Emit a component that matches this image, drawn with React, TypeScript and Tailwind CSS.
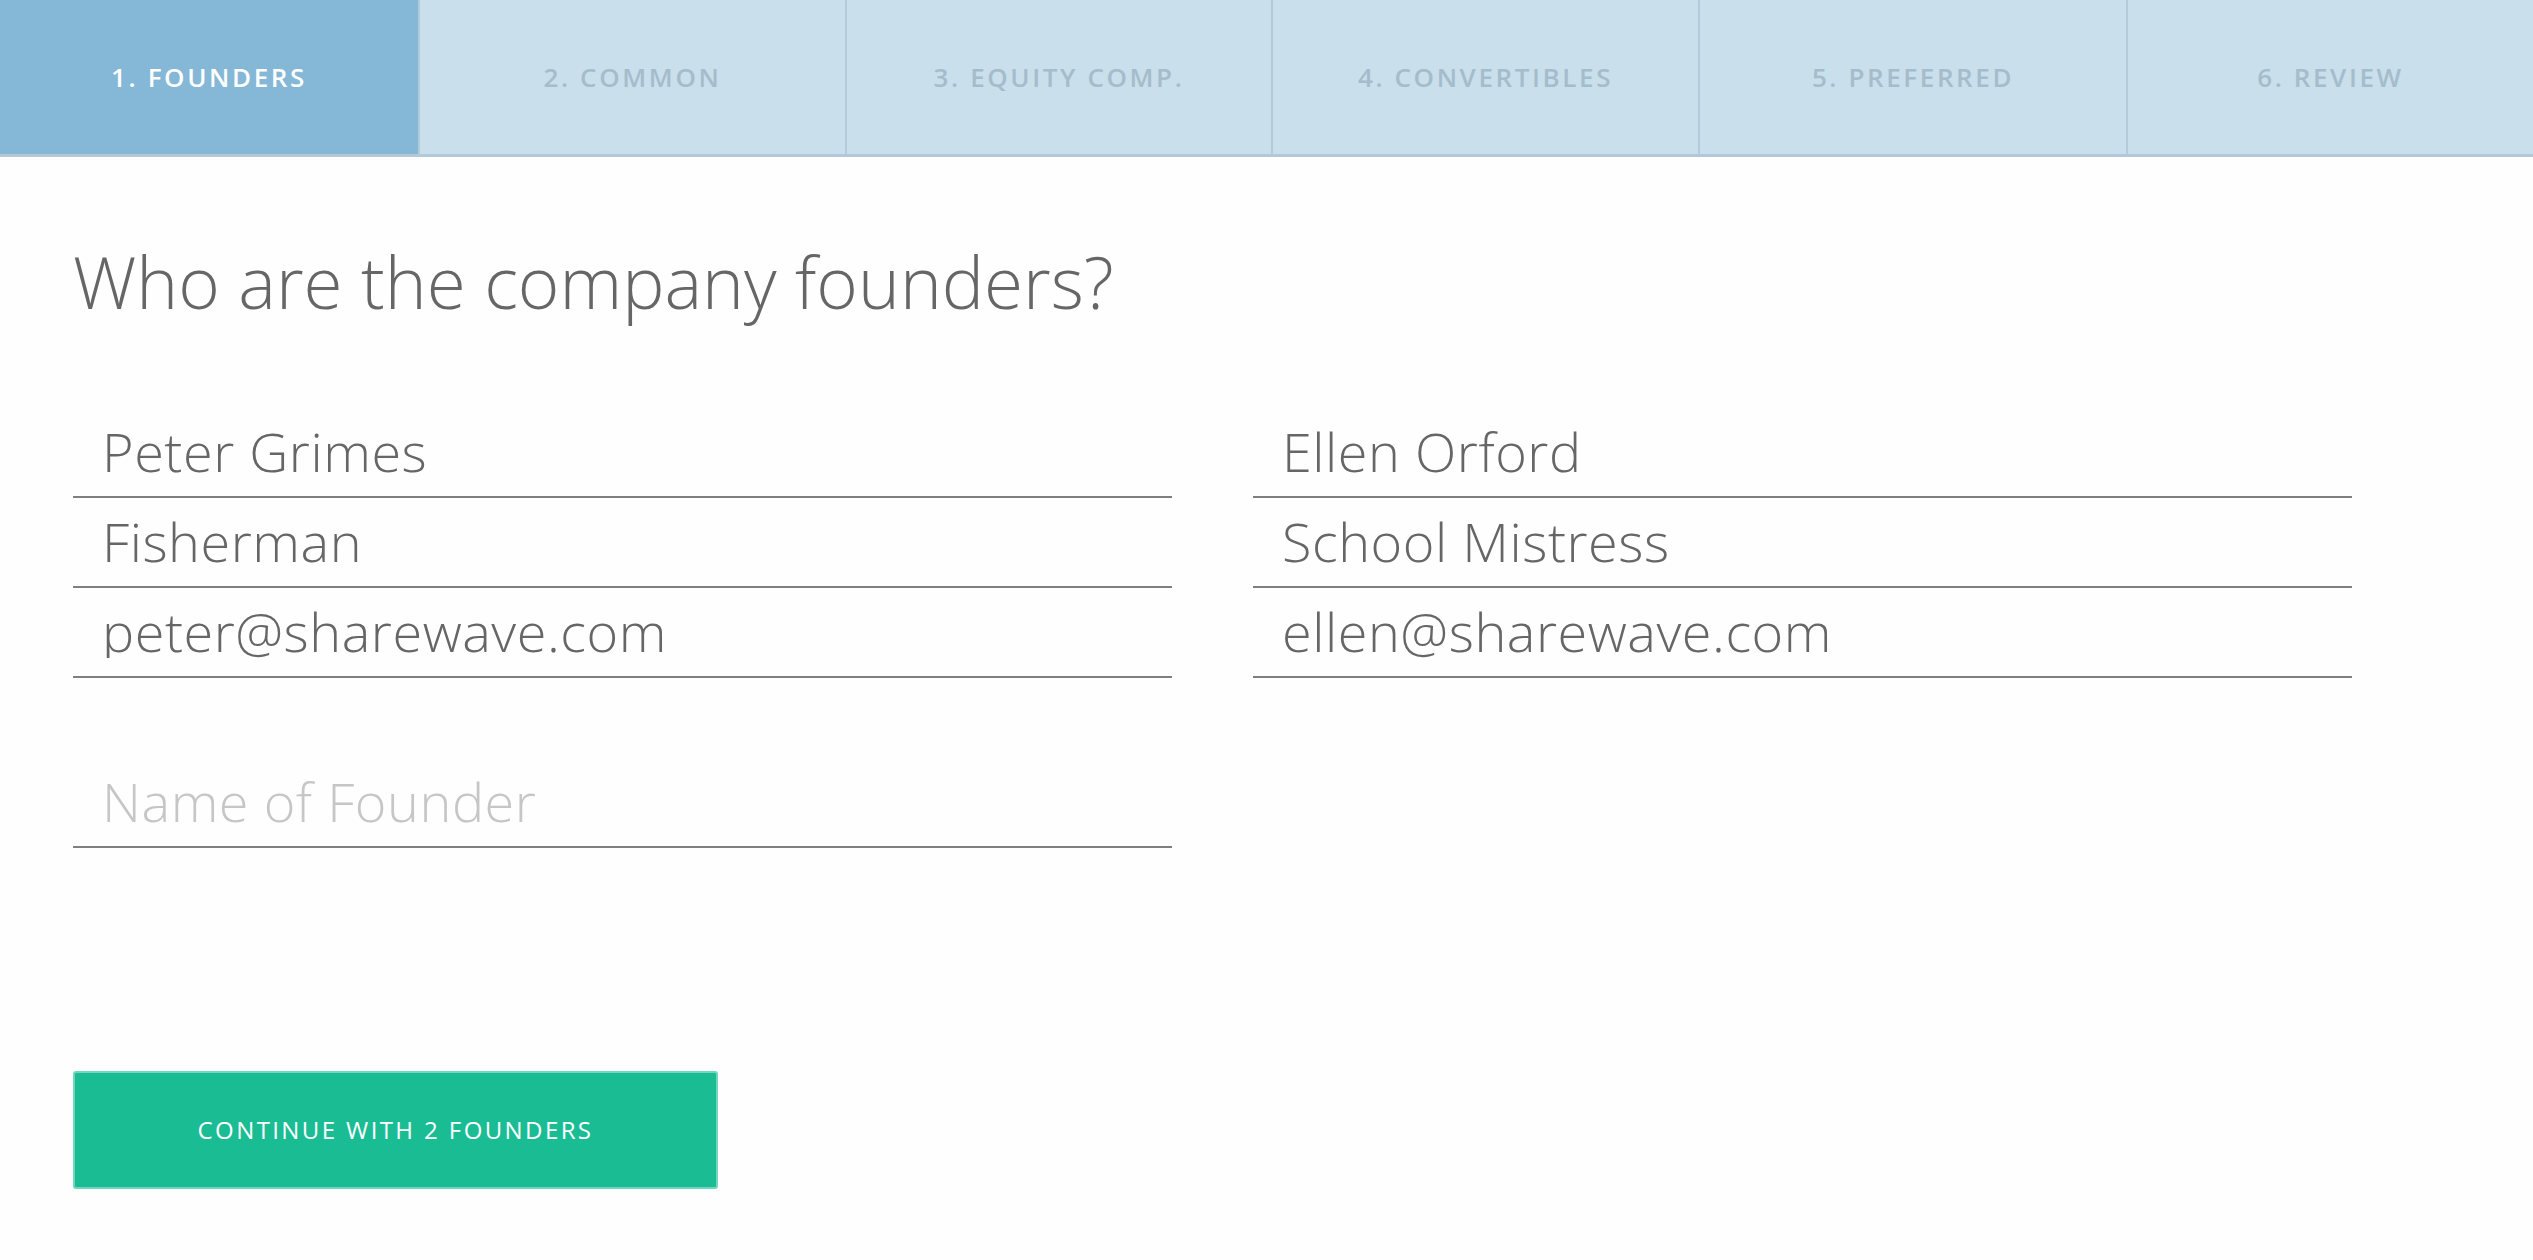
import { useState } from 'react'

const steps = [
  { label: '1. Founders', width: 'w-[418px]' },
  { label: '2. Common', width: 'w-[427px]' },
  { label: '3. Equity Comp.', width: 'w-[426px]' },
  { label: '4. Convertibles', width: 'w-[427px]' },
  { label: '5. Preferred', width: 'w-[428px]' },
  { label: '6. Review', width: 'flex-1' },
]

const founders = [
  { name: 'Peter Grimes', title: 'Fisherman', email: 'peter@sharewave.com' },
  { name: 'Ellen Orford', title: 'School Mistress', email: 'ellen@sharewave.com' },
]

const font = "font-['Open_Sans','Liberation_Sans',sans-serif]"

function Field({ value, placeholder }: { value?: string; placeholder?: string }) {
  return (
    <div className="h-[90px] flex items-end pb-[18px] pl-[29px] border-b-2 border-[#7f7f7f]">
      <input
        defaultValue={value}
        placeholder={placeholder}
        className={`w-full h-[54px] bg-transparent outline-none text-[54px] leading-[54px] font-light tracking-[0.01em] text-[#666666] placeholder:text-[#c6c6c6] ${font}`}
      />
    </div>
  )
}

export default function App() {
  const [active] = useState(0)

  return (
    <div className={`min-h-screen bg-[#fefefe] ${font}`}>
      {/* step tabs */}
      <nav className="flex h-[157px] border-b-[3px] border-[#b3c9d7]">
        {steps.map((step, i) => (
          <div
            key={step.label}
            className={`${step.width} flex items-center justify-center uppercase text-[26px] font-semibold tracking-[0.1em] ${
              i > 0 ? 'border-l-2 border-[#b2cad9]' : ''
            } ${i === active ? 'bg-[#85b7d7] text-white' : 'bg-[#c9dfec] text-[#a5bccb]'}`}
          >
            {step.label}
          </div>
        ))}
      </nav>

      <main className="px-[73px]">
        <h1 className="mt-[90px] text-[71px] leading-[70px] font-light text-[#666666]">
          Who are the company founders?
        </h1>

        <div className="mt-[91px] grid grid-cols-[1099px_1099px] gap-x-[81px] gap-y-[80px]">
          {founders.map((f) => (
            <div key={f.email}>
              <Field value={f.name} />
              <Field value={f.title} />
              <Field value={f.email} />
            </div>
          ))}
          <div>
            <Field placeholder="Name of Founder" />
          </div>
        </div>

        <button className="mt-[223px] w-[645px] h-[118px] rounded-[3px] border-2 border-[#70d6bd] bg-[#1abc94] text-white uppercase text-[24px] font-medium tracking-[0.1em]">
          Continue with 2 founders
        </button>
      </main>
    </div>
  )
}
